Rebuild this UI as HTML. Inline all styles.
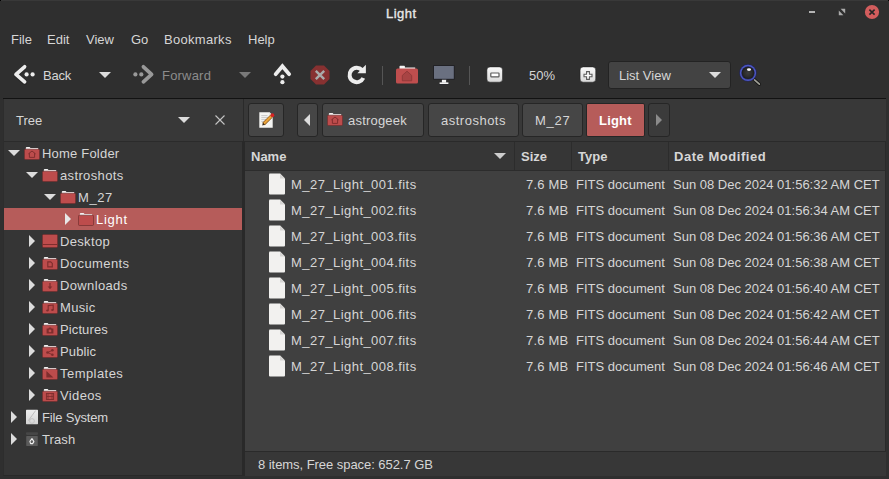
<!DOCTYPE html>
<html><head><meta charset="utf-8"><style>
html,body{margin:0;padding:0;}
body{width:889px;height:479px;overflow:hidden;position:relative;background:#2f2f2f;font-family:"Liberation Sans",sans-serif;font-size:13px;}
.t{position:absolute;white-space:pre;line-height:15px;font-size:13px;}
svg{display:block}
</style></head><body>
<div style="position:absolute;left:0;top:0;width:889px;height:1px;background:#393939"></div>
<div style="position:absolute;left:0;top:0;width:1px;height:1px;background:#000"></div><div style="position:absolute;left:888px;top:0;width:1px;height:1px;background:#000"></div>
<div class="t" style="left:386px;top:6px;color:#e8e8e8;font-weight:normal;letter-spacing:0.5px;-webkit-text-stroke:0.35px #e8e8e8">Light</div>
<div style="position:absolute;left:809px;top:11px;width:6px;height:2px;background:#b4b4b4"></div>
<svg style="position:absolute;left:834px;top:4px" width="16" height="16" viewBox="834 4 16 16"><path d="M840.6 8.8H845.2V13.4Z M838.8 10.6V15.2H843.4Z" fill="#ababab"/></svg>
<svg style="position:absolute;left:864px;top:4px" width="16" height="16" viewBox="0 0 16 16"><circle cx="8" cy="8" r="7.1" fill="#d35d5d"/><path d="M5.4 5.6L10.6 10.6M10.6 5.6L5.4 10.6" stroke="#262626" stroke-width="1.6"/></svg>
<div class="t" style="left:11px;top:32px;color:#d6d6d6;font-weight:normal;">File</div>
<div class="t" style="left:47px;top:32px;color:#d6d6d6;font-weight:normal;">Edit</div>
<div class="t" style="left:86px;top:32px;color:#d6d6d6;font-weight:normal;">View</div>
<div class="t" style="left:131px;top:32px;color:#d6d6d6;font-weight:normal;">Go</div>
<div class="t" style="left:164px;top:32px;color:#d6d6d6;font-weight:normal;letter-spacing:0.3px">Bookmarks</div>
<div class="t" style="left:248px;top:32px;color:#d6d6d6;font-weight:normal;">Help</div>
<svg style="position:absolute;left:8px;top:60px" width="32" height="30" viewBox="8 60 32 30"><path d="M24.6 66.8L16 74.4L24.6 81.8" fill="none" stroke="#222" stroke-opacity="0.5" stroke-width="5" stroke-linecap="round" stroke-linejoin="round" transform="translate(0 0.6)"/><path d="M24.6 66.8L16 74.4L24.6 81.8" fill="none" stroke="#ededed" stroke-width="3.7" stroke-linecap="round" stroke-linejoin="round"/><circle cx="26.6" cy="74.4" r="2.1" fill="#ededed"/><circle cx="32.6" cy="74.4" r="2.1" fill="#ededed"/></svg>
<div class="t" style="left:43px;top:68px;color:#d6d6d6;font-weight:normal;letter-spacing:-0.25px">Back</div>
<svg style="position:absolute;left:99px;top:72px" width="12" height="6" viewBox="0 0 12 6"><path d="M0 0H12L6 6Z" fill="#dcdcdc"/></svg>
<svg style="position:absolute;left:128px;top:60px" width="32" height="30" viewBox="128 60 32 30"><path d="M143.4 66.8L151.6 74.4L143.4 81.8" fill="none" stroke="#999" stroke-width="3.7" stroke-linecap="round" stroke-linejoin="round"/><circle cx="135.4" cy="74.4" r="2.1" fill="#999"/><circle cx="141.3" cy="74.4" r="2.1" fill="#999"/></svg>
<div class="t" style="left:162px;top:68px;color:#8c8c8c;font-weight:normal;letter-spacing:0.2px">Forward</div>
<svg style="position:absolute;left:239px;top:72px" width="12" height="6" viewBox="0 0 12 6"><path d="M0 0H12L6 6Z" fill="#7a7a7a"/></svg>
<svg style="position:absolute;left:266px;top:60px" width="32" height="30" viewBox="266 60 32 30"><path d="M275.6 74.2L282.4 66.2L289.2 74.2" fill="none" stroke="#ededed" stroke-width="3.7" stroke-linecap="round" stroke-linejoin="miter" stroke-miterlimit="3"/><circle cx="282.4" cy="76.6" r="2.1" fill="#ededed"/><circle cx="282.4" cy="82.2" r="2.1" fill="#ededed"/></svg>
<svg style="position:absolute;left:310px;top:65px" width="20" height="20" viewBox="0 0 20 20"><path d="M6 0.5H14L19.5 6V14L14 19.5H6L0.5 14V6Z" fill="#873131"/><path d="M5.8 5.8L14.2 14.2M14.2 5.8L5.8 14.2" stroke="#a9abaa" stroke-width="2.4"/></svg>
<svg style="position:absolute;left:340px;top:60px" width="32" height="30" viewBox="340 60 32 30"><path d="M362 70A7.2 7.2 0 1 0 363.3 78.0" fill="none" stroke="#ededed" stroke-width="4"/><path d="M365.9 64.8V73.3H357.4Z" fill="#ededed"/></svg>
<div style="position:absolute;left:382px;top:66px;width:1px;height:19px;background:#555"></div>
<svg style="position:absolute;left:390px;top:60px" width="32" height="30" viewBox="390 60 32 30"><path d="M399.5 69V66.5Q399.5 65.8 400.2 65.8H404.2Q404.9 65.8 404.9 66.5V67.6H415.2V69Z" fill="#f4f4f4"/><rect x="396" y="68.6" width="22" height="15" rx="1.6" fill="#bf4e4e"/><path d="M407 71.2L402.3 75.4V80.8H411.7V75.4Z" fill="#a84444" stroke="#8e3838" stroke-width="0.9"/></svg>
<svg style="position:absolute;left:430px;top:60px" width="30" height="30" viewBox="430 60 30 30"><rect x="433.2" y="65.2" width="21.4" height="14.4" fill="#1e1e24"/><rect x="434" y="66" width="19.8" height="12.8" fill="#6a7080"/><rect x="441.6" y="79.4" width="4.8" height="3.6" fill="#f2f2f2" stroke="#1e1e24" stroke-width="0.6"/><rect x="439.6" y="82.4" width="8.8" height="1.8" fill="#f2f2f2"/><rect x="439.2" y="84.2" width="9.6" height="0.8" fill="#1e1e24"/></svg>
<div style="position:absolute;left:469px;top:66px;width:1px;height:19px;background:#555"></div>
<svg style="position:absolute;left:484px;top:64px" width="22" height="22" viewBox="484 64 22 22"><defs><linearGradient id="zg" x1="0" y1="0" x2="0" y2="1"><stop offset="0" stop-color="#fafafa"/><stop offset="1" stop-color="#d9d9d9"/></linearGradient></defs><rect x="486.9" y="66.9" width="15.6" height="15.3" rx="3.2" fill="url(#zg)" stroke="#1f1f1f" stroke-width="0.5"/><rect x="490.8" y="73" width="8.2" height="3.8" rx="0.6" fill="#fff" stroke="#5a5a5a" stroke-width="1.2"/></svg>
<div class="t" style="left:529px;top:68px;color:#d6d6d6;font-weight:normal;">50%</div>
<svg style="position:absolute;left:577px;top:64px" width="22" height="22" viewBox="577 64 22 22"><rect x="580.1" y="66.9" width="15.6" height="15.3" rx="3.2" fill="url(#zg)" stroke="#1f1f1f" stroke-width="0.5"/><path d="M586.6 71.6H589.4V74.2H592V76.8H589.4V79.4H586.6V76.8H584V74.2H586.6Z" fill="#fff" stroke="#5a5a5a" stroke-width="1.1"/></svg>
<div style="position:absolute;box-sizing:border-box;left:608px;top:61px;width:123px;height:28px;background:#434343;border:1px solid #232323;border-radius:3px"></div>
<div class="t" style="left:619px;top:68px;color:#d6d6d6;font-weight:normal;">List View</div>
<svg style="position:absolute;left:709px;top:72px" width="12" height="6" viewBox="0 0 12 6"><path d="M0 0H12L6 6Z" fill="#dcdcdc"/></svg>
<svg style="position:absolute;left:732px;top:58px" width="36" height="34" viewBox="732 58 36 34"><defs><radialGradient id="lg" cx="0.5" cy="0.5" r="0.5"><stop offset="0" stop-color="#3c3c3c"/><stop offset="0.7" stop-color="#2a2a2a"/><stop offset="1" stop-color="#1a1a1a"/></radialGradient></defs><path d="M754.5 79.8L759.4 84.2" stroke="#151515" stroke-width="3.2" stroke-linecap="round"/><path d="M754.5 79.8L759.4 84.2" stroke="#a0a096" stroke-width="1.6" stroke-linecap="round"/><circle cx="748" cy="72.9" r="8.8" fill="#23275a"/><circle cx="748" cy="72.9" r="8.1" fill="#4c56c2"/><circle cx="748" cy="72.9" r="6.7" fill="#2c3060"/><circle cx="748" cy="72.9" r="6.2" fill="url(#lg)"/><ellipse cx="749" cy="69.6" rx="2.1" ry="1.3" fill="#f6f6f6"/></svg>
<div style="position:absolute;left:3px;top:98px;width:883px;height:1px;background:#121212"></div>
<div style="position:absolute;left:3px;top:99px;width:239px;height:376px;background:#353535;border-left:1px solid #2d2d2d;border-bottom:1px solid #292929"></div>
<div style="position:absolute;left:4px;top:99px;width:239px;height:42px;background:#383838;border-bottom:1px solid #2b2b2b"></div>
<div style="position:absolute;left:243px;top:99px;width:1px;height:42px;background:#2a2a2a"></div>
<div style="position:absolute;left:242px;top:141px;width:3px;height:335px;background:#292929"></div>
<div class="t" style="left:16px;top:113px;color:#d6d6d6;font-weight:normal;">Tree</div>
<svg style="position:absolute;left:178px;top:117px" width="12" height="6" viewBox="0 0 12 6"><path d="M0 0H12L6 6Z" fill="#dcdcdc"/></svg>
<svg style="position:absolute;left:215px;top:115px" width="10" height="10" viewBox="0 0 10 10"><path d="M0.5 0.5L9.5 9.5M9.5 0.5L0.5 9.5" stroke="#c4c4c4" stroke-width="1.1"/></svg>
<div style="position:absolute;left:4px;top:208px;width:238px;height:22px;background:#b65c5a"></div>
<svg style="position:absolute;left:8px;top:150px" width="12" height="6" viewBox="0 0 12 6"><path d="M0 0H12L6 6Z" fill="#dcdcdc"/></svg>
<svg style="position:absolute;left:24px;top:146px" width="16" height="15" viewBox="0 0 16 15"><path d="M1.8 4V2Q1.8 1.1 2.8 1.1H5.4Q6 1.1 6.4 2H14.2V4Z" fill="#f2f2f2"/><rect x="0.45" y="3.2" width="15.1" height="10.3" rx="1.1" fill="#bd4c4c" stroke="#6e2c2c" stroke-opacity="0.75" stroke-width="0.9"/><path d="M4.4 7.9L8 5.0L11.6 7.9M5.4 7.1V11.4H10.6V7.1" fill="none" stroke="#7e2d2d" stroke-width="0.95"/></svg>
<div class="t" style="left:42px;top:146px;color:#d6d6d6;font-weight:normal;letter-spacing:0.2px">Home Folder</div>
<svg style="position:absolute;left:26px;top:172px" width="12" height="6" viewBox="0 0 12 6"><path d="M0 0H12L6 6Z" fill="#dcdcdc"/></svg>
<svg style="position:absolute;left:42px;top:168px" width="16" height="15" viewBox="0 0 16 15"><path d="M1.8 4V2Q1.8 1.1 2.8 1.1H5.4Q6 1.1 6.4 2H14.2V4Z" fill="#f2f2f2"/><rect x="0.45" y="3.2" width="15.1" height="10.3" rx="1.1" fill="#bd4c4c" stroke="#6e2c2c" stroke-opacity="0.75" stroke-width="0.9"/></svg>
<div class="t" style="left:60px;top:168px;color:#d6d6d6;font-weight:normal;letter-spacing:0.36px">astroshots</div>
<svg style="position:absolute;left:44px;top:194px" width="12" height="6" viewBox="0 0 12 6"><path d="M0 0H12L6 6Z" fill="#dcdcdc"/></svg>
<svg style="position:absolute;left:60px;top:190px" width="16" height="15" viewBox="0 0 16 15"><path d="M1.8 4V2Q1.8 1.1 2.8 1.1H5.4Q6 1.1 6.4 2H14.2V4Z" fill="#f2f2f2"/><rect x="0.45" y="3.2" width="15.1" height="10.3" rx="1.1" fill="#bd4c4c" stroke="#6e2c2c" stroke-opacity="0.75" stroke-width="0.9"/></svg>
<div class="t" style="left:78px;top:190px;color:#d6d6d6;font-weight:normal;letter-spacing:0.6px">M_27</div>
<svg style="position:absolute;left:65px;top:213px" width="6" height="12" viewBox="0 0 6 12"><path d="M0 0V12L6 6Z" fill="#e8e8e8"/></svg>
<svg style="position:absolute;left:78px;top:212px" width="16" height="15" viewBox="0 0 16 15"><path d="M1.8 4V2Q1.8 1.1 2.8 1.1H5.4Q6 1.1 6.4 2H14.2V4Z" fill="#f2f2f2"/><rect x="0.45" y="3.2" width="15.1" height="10.3" rx="1.1" fill="#bd4c4c" stroke="#6e2c2c" stroke-opacity="0.75" stroke-width="0.9"/></svg>
<div class="t" style="left:96px;top:212px;color:#ffffff;font-weight:normal;letter-spacing:0.72px">Light</div>
<svg style="position:absolute;left:29px;top:235px" width="6" height="12" viewBox="0 0 6 12"><path d="M0 0V12L6 6Z" fill="#dcdcdc"/></svg>
<svg style="position:absolute;left:42px;top:234px" width="16" height="15" viewBox="0 0 16 15"><rect x="0.45" y="0.45" width="15.1" height="13.1" rx="1.1" fill="#bd4c4c" stroke="#6e2c2c" stroke-opacity="0.75" stroke-width="0.9"/><rect x="0.5" y="10" width="15" height="1" fill="#7e2d2d"/></svg>
<div class="t" style="left:60px;top:234px;color:#d6d6d6;font-weight:normal;letter-spacing:0.33px">Desktop</div>
<svg style="position:absolute;left:29px;top:257px" width="6" height="12" viewBox="0 0 6 12"><path d="M0 0V12L6 6Z" fill="#dcdcdc"/></svg>
<svg style="position:absolute;left:42px;top:256px" width="16" height="15" viewBox="0 0 16 15"><path d="M1.8 4V2Q1.8 1.1 2.8 1.1H5.4Q6 1.1 6.4 2H14.2V4Z" fill="#f2f2f2"/><rect x="0.45" y="3.2" width="15.1" height="10.3" rx="1.1" fill="#bd4c4c" stroke="#6e2c2c" stroke-opacity="0.75" stroke-width="0.9"/><path d="M5.8 5.8H8.7L10.3 7.4V10.9H5.8Z" fill="none" stroke="#7e2d2d" stroke-width="1.15" stroke-linejoin="miter"/></svg>
<div class="t" style="left:60px;top:256px;color:#d6d6d6;font-weight:normal;letter-spacing:0.42px">Documents</div>
<svg style="position:absolute;left:29px;top:279px" width="6" height="12" viewBox="0 0 6 12"><path d="M0 0V12L6 6Z" fill="#dcdcdc"/></svg>
<svg style="position:absolute;left:42px;top:278px" width="16" height="15" viewBox="0 0 16 15"><path d="M1.8 4V2Q1.8 1.1 2.8 1.1H5.4Q6 1.1 6.4 2H14.2V4Z" fill="#f2f2f2"/><rect x="0.45" y="3.2" width="15.1" height="10.3" rx="1.1" fill="#bd4c4c" stroke="#6e2c2c" stroke-opacity="0.75" stroke-width="0.9"/><path d="M8 5V10.6" stroke="#7e2d2d" stroke-width="1.3"/><path d="M5.6 8.4L8 11L10.4 8.4Z" fill="#7e2d2d"/></svg>
<div class="t" style="left:60px;top:278px;color:#d6d6d6;font-weight:normal;letter-spacing:0.36px">Downloads</div>
<svg style="position:absolute;left:29px;top:301px" width="6" height="12" viewBox="0 0 6 12"><path d="M0 0V12L6 6Z" fill="#dcdcdc"/></svg>
<svg style="position:absolute;left:42px;top:300px" width="16" height="15" viewBox="0 0 16 15"><path d="M1.8 4V2Q1.8 1.1 2.8 1.1H5.4Q6 1.1 6.4 2H14.2V4Z" fill="#f2f2f2"/><rect x="0.45" y="3.2" width="15.1" height="10.3" rx="1.1" fill="#bd4c4c" stroke="#6e2c2c" stroke-opacity="0.75" stroke-width="0.9"/><path d="M6.2 10.6V5.6L11.2 5V10" fill="none" stroke="#7e2d2d" stroke-width="1.1"/><ellipse cx="5.4" cy="10.6" rx="1.3" ry="1" fill="#7e2d2d"/><ellipse cx="10.4" cy="10" rx="1.3" ry="1" fill="#7e2d2d"/></svg>
<div class="t" style="left:60px;top:300px;color:#d6d6d6;font-weight:normal;letter-spacing:0.3px">Music</div>
<svg style="position:absolute;left:29px;top:323px" width="6" height="12" viewBox="0 0 6 12"><path d="M0 0V12L6 6Z" fill="#dcdcdc"/></svg>
<svg style="position:absolute;left:42px;top:322px" width="16" height="15" viewBox="0 0 16 15"><path d="M1.8 4V2Q1.8 1.1 2.8 1.1H5.4Q6 1.1 6.4 2H14.2V4Z" fill="#f2f2f2"/><rect x="0.45" y="3.2" width="15.1" height="10.3" rx="1.1" fill="#bd4c4c" stroke="#6e2c2c" stroke-opacity="0.75" stroke-width="0.9"/><path d="M4.6 6.6H6.3L7 5.6H9L9.7 6.6H11.4V11.4H4.6Z" fill="#7e2d2d"/><circle cx="8" cy="8.9" r="1.4" fill="#bf4d4d"/></svg>
<div class="t" style="left:60px;top:322px;color:#d6d6d6;font-weight:normal;letter-spacing:0.11px">Pictures</div>
<svg style="position:absolute;left:29px;top:345px" width="6" height="12" viewBox="0 0 6 12"><path d="M0 0V12L6 6Z" fill="#dcdcdc"/></svg>
<svg style="position:absolute;left:42px;top:344px" width="16" height="15" viewBox="0 0 16 15"><path d="M1.8 4V2Q1.8 1.1 2.8 1.1H5.4Q6 1.1 6.4 2H14.2V4Z" fill="#f2f2f2"/><rect x="0.45" y="3.2" width="15.1" height="10.3" rx="1.1" fill="#bd4c4c" stroke="#6e2c2c" stroke-opacity="0.75" stroke-width="0.9"/><path d="M5.6 8.5L10.4 6.3M5.6 8.5L10.4 10.7" stroke="#7e2d2d" stroke-width="0.9"/><circle cx="5.5" cy="8.5" r="1.3" fill="#7e2d2d"/><circle cx="10.4" cy="6.2" r="1.3" fill="#7e2d2d"/><circle cx="10.4" cy="10.8" r="1.3" fill="#7e2d2d"/></svg>
<div class="t" style="left:60px;top:344px;color:#d6d6d6;font-weight:normal;letter-spacing:0.14px">Public</div>
<svg style="position:absolute;left:29px;top:367px" width="6" height="12" viewBox="0 0 6 12"><path d="M0 0V12L6 6Z" fill="#dcdcdc"/></svg>
<svg style="position:absolute;left:42px;top:366px" width="16" height="15" viewBox="0 0 16 15"><path d="M1.8 4V2Q1.8 1.1 2.8 1.1H5.4Q6 1.1 6.4 2H14.2V4Z" fill="#f2f2f2"/><rect x="0.45" y="3.2" width="15.1" height="10.3" rx="1.1" fill="#bd4c4c" stroke="#6e2c2c" stroke-opacity="0.75" stroke-width="0.9"/><path d="M4.4 5.1V11.4H11.4Z" fill="#7e2d2d"/></svg>
<div class="t" style="left:60px;top:366px;color:#d6d6d6;font-weight:normal;letter-spacing:0.45px">Templates</div>
<svg style="position:absolute;left:29px;top:389px" width="6" height="12" viewBox="0 0 6 12"><path d="M0 0V12L6 6Z" fill="#dcdcdc"/></svg>
<svg style="position:absolute;left:42px;top:388px" width="16" height="15" viewBox="0 0 16 15"><path d="M1.8 4V2Q1.8 1.1 2.8 1.1H5.4Q6 1.1 6.4 2H14.2V4Z" fill="#f2f2f2"/><rect x="0.45" y="3.2" width="15.1" height="10.3" rx="1.1" fill="#bd4c4c" stroke="#6e2c2c" stroke-opacity="0.75" stroke-width="0.9"/><rect x="4.4" y="5.5" width="7.2" height="6" fill="none" stroke="#7e2d2d" stroke-width="0.9"/><path d="M6 5.5V11.5M10 5.5V11.5M4.4 8.5H11.6" stroke="#7e2d2d" stroke-width="0.8"/></svg>
<div class="t" style="left:60px;top:388px;color:#d6d6d6;font-weight:normal;letter-spacing:0.36px">Videos</div>
<svg style="position:absolute;left:11px;top:411px" width="6" height="12" viewBox="0 0 6 12"><path d="M0 0V12L6 6Z" fill="#dcdcdc"/></svg>
<svg style="position:absolute;left:26px;top:409px" width="12" height="16" viewBox="0 0 12 16"><defs><linearGradient id="fsg" x1="0" y1="0" x2="0" y2="1"><stop offset="0" stop-color="#ececec"/><stop offset="1" stop-color="#d4d4d4"/></linearGradient></defs><rect x="0" y="0.8" width="12" height="14.4" rx="0.6" fill="url(#fsg)"/><path d="M9.6 1.6L2.4 11.6" stroke="#b4b4b4" stroke-width="0.8"/><circle cx="6" cy="12" r="2.4" fill="none" stroke="#bdbdbd" stroke-width="0.8"/></svg>
<div class="t" style="left:42px;top:410px;color:#d6d6d6;font-weight:normal;letter-spacing:-0.18px">File System</div>
<svg style="position:absolute;left:11px;top:433px" width="6" height="12" viewBox="0 0 6 12"><path d="M0 0V12L6 6Z" fill="#dcdcdc"/></svg>
<svg style="position:absolute;left:26px;top:432px" width="12" height="14" viewBox="0 0 12 14"><rect x="0" y="0.3" width="12" height="2.6" rx="0.8" fill="#464646"/><rect x="0.2" y="4.1" width="11.6" height="9.9" rx="0.4" fill="#5b5b5b"/><path d="M6 6.6L7.9 9.6L6.6 11.6H4.6L3.9 9.3Z" fill="none" stroke="#f0f0f0" stroke-width="1.1" stroke-linejoin="round"/></svg>
<div class="t" style="left:42px;top:432px;color:#d6d6d6;font-weight:normal;letter-spacing:0.1px">Trash</div>
<div style="position:absolute;left:244px;top:99px;width:642px;height:42px;background:#383838"></div>
<div style="position:absolute;left:245px;top:141px;width:641px;height:1px;background:#2a2a2a"></div>
<div style="position:absolute;box-sizing:border-box;left:248px;top:103px;width:36px;height:34px;background:#464646;border:1px solid #262626;border-radius:3px"></div>
<svg style="position:absolute;left:246px;top:102px" width="40" height="36" viewBox="246 102 40 36"><path d="M259.3 112.3H269.6L272.7 115.4V127.8H259.3Z" fill="#f5f5f3"/><path d="M269.6 112.3V115.4H272.7Z" fill="#d8d8d6"/><path d="M261.3 115.6H267.5M261.3 117.6H268M261.3 119.6H267M261.3 121.6H266" stroke="#b8b8b8" stroke-width="0.7"/><path d="M263.6 124L271.4 116.2" stroke="#7a4a10" stroke-width="3.4" stroke-linecap="butt"/><path d="M263.6 124L271.4 116.2" stroke="#eba53c" stroke-width="2.4" stroke-linecap="butt"/><path d="M262.2 125.4L262.9 122.6L265 124.7Z" fill="#3a2a1a"/><circle cx="272.4" cy="115.2" r="1.9" fill="#d42424"/></svg>
<div style="position:absolute;box-sizing:border-box;left:297px;top:103px;width:21px;height:34px;background:#464646;border:1px solid #262626;border-radius:3px"></div>
<svg style="position:absolute;left:304px;top:114px" width="6" height="12" viewBox="0 0 6 12"><path d="M6 0V12L0 6Z" fill="#dcdcdc"/></svg>
<div style="position:absolute;box-sizing:border-box;left:322px;top:103px;width:102px;height:34px;background:#464646;border:1px solid #262626;border-radius:3px"></div>
<svg style="position:absolute;left:327px;top:112px" width="16" height="15" viewBox="0 0 16 15"><path d="M1.8 4V2Q1.8 1.1 2.8 1.1H5.4Q6 1.1 6.4 2H14.2V4Z" fill="#f2f2f2"/><rect x="0.45" y="3.2" width="15.1" height="10.3" rx="1.1" fill="#bd4c4c" stroke="#6e2c2c" stroke-opacity="0.75" stroke-width="0.9"/><path d="M4.4 7.9L8 5.0L11.6 7.9M5.4 7.1V11.4H10.6V7.1" fill="none" stroke="#7e2d2d" stroke-width="0.95"/></svg>
<div class="t" style="left:348px;top:113px;color:#d6d6d6;font-weight:normal;letter-spacing:0.2px">astrogeek</div>
<div style="position:absolute;box-sizing:border-box;left:428px;top:103px;width:91px;height:34px;background:#464646;border:1px solid #262626;border-radius:3px"></div>
<div class="t" style="left:441px;top:113px;color:#d6d6d6;font-weight:normal;letter-spacing:0.5px">astroshots</div>
<div style="position:absolute;box-sizing:border-box;left:522px;top:103px;width:61px;height:34px;background:#464646;border:1px solid #262626;border-radius:3px"></div>
<div class="t" style="left:535px;top:113px;color:#d6d6d6;font-weight:normal;letter-spacing:0.7px">M_27</div>
<div style="position:absolute;box-sizing:border-box;left:586px;top:103px;width:59px;height:34px;background:#b65c5a;border:1px solid #262626;border-radius:2px"></div>
<div class="t" style="left:599px;top:113px;color:#ffffff;font-weight:bold;letter-spacing:0.2px">Light</div>
<div style="position:absolute;box-sizing:border-box;left:648px;top:103px;width:22px;height:34px;background:#3b3b3b;border:1px solid #262626;border-radius:3px"></div>
<svg style="position:absolute;left:656px;top:114px" width="6" height="12" viewBox="0 0 6 12"><path d="M0 0V12L6 6Z" fill="#8a8a8a"/></svg>
<div style="position:absolute;left:245px;top:142px;width:640px;height:28px;background:#363636"></div>
<div style="position:absolute;left:245px;top:170px;width:640px;height:1px;background:#2c2c2c"></div>
<div style="position:absolute;left:514px;top:142px;width:1px;height:28px;background:#2c2c2c"></div>
<div style="position:absolute;left:571px;top:142px;width:1px;height:28px;background:#2c2c2c"></div>
<div style="position:absolute;left:668px;top:142px;width:1px;height:28px;background:#2c2c2c"></div>
<div class="t" style="left:251px;top:149px;color:#d6d6d6;font-weight:bold;">Name</div>
<svg style="position:absolute;left:494px;top:153px" width="12" height="6" viewBox="0 0 12 6"><path d="M0 0H12L6 6Z" fill="#cdcdcd"/></svg>
<div class="t" style="left:521px;top:149px;color:#d6d6d6;font-weight:bold;">Size</div>
<div class="t" style="left:578px;top:149px;color:#d6d6d6;font-weight:bold;">Type</div>
<div class="t" style="left:674px;top:149px;color:#d6d6d6;font-weight:bold;letter-spacing:0.53px">Date Modified</div>
<div style="position:absolute;left:245px;top:171px;width:640px;height:280px;background:#404040"></div>
<div style="position:absolute;left:245px;top:451px;width:641px;height:1px;background:#2a2a2a"></div>
<div style="position:absolute;left:885px;top:142px;width:1px;height:310px;background:#2a2a2a"></div>
<svg style="position:absolute;left:268px;top:173px" width="18" height="22" viewBox="0 0 18 22"><path d="M1.5 0.5H12L17 5.5V20.5A1 1 0 0 1 16 21.5H2A1 1 0 0 1 1 20.5V1.5Z" fill="#f2f1ef"/><path d="M12 0.5V5.5H17Z" fill="#d6d5d3"/></svg>
<div class="t" style="left:291px;top:177px;color:#d6d6d6;font-weight:normal;letter-spacing:0.45px">M_27_Light_001.fits</div>
<div class="t" style="left:526px;top:177px;color:#d6d6d6;font-weight:normal;letter-spacing:0.2px">7.6 MB</div>
<div class="t" style="left:576px;top:177px;color:#d6d6d6;font-weight:normal;">FITS document</div>
<div class="t" style="left:673px;top:177px;color:#d6d6d6;font-weight:normal;">Sun 08 Dec 2024 01:56:32 AM CET</div>
<svg style="position:absolute;left:268px;top:199px" width="18" height="22" viewBox="0 0 18 22"><path d="M1.5 0.5H12L17 5.5V20.5A1 1 0 0 1 16 21.5H2A1 1 0 0 1 1 20.5V1.5Z" fill="#f2f1ef"/><path d="M12 0.5V5.5H17Z" fill="#d6d5d3"/></svg>
<div class="t" style="left:291px;top:203px;color:#d6d6d6;font-weight:normal;letter-spacing:0.45px">M_27_Light_002.fits</div>
<div class="t" style="left:526px;top:203px;color:#d6d6d6;font-weight:normal;letter-spacing:0.2px">7.6 MB</div>
<div class="t" style="left:576px;top:203px;color:#d6d6d6;font-weight:normal;">FITS document</div>
<div class="t" style="left:673px;top:203px;color:#d6d6d6;font-weight:normal;">Sun 08 Dec 2024 01:56:34 AM CET</div>
<svg style="position:absolute;left:268px;top:225px" width="18" height="22" viewBox="0 0 18 22"><path d="M1.5 0.5H12L17 5.5V20.5A1 1 0 0 1 16 21.5H2A1 1 0 0 1 1 20.5V1.5Z" fill="#f2f1ef"/><path d="M12 0.5V5.5H17Z" fill="#d6d5d3"/></svg>
<div class="t" style="left:291px;top:229px;color:#d6d6d6;font-weight:normal;letter-spacing:0.45px">M_27_Light_003.fits</div>
<div class="t" style="left:526px;top:229px;color:#d6d6d6;font-weight:normal;letter-spacing:0.2px">7.6 MB</div>
<div class="t" style="left:576px;top:229px;color:#d6d6d6;font-weight:normal;">FITS document</div>
<div class="t" style="left:673px;top:229px;color:#d6d6d6;font-weight:normal;">Sun 08 Dec 2024 01:56:36 AM CET</div>
<svg style="position:absolute;left:268px;top:251px" width="18" height="22" viewBox="0 0 18 22"><path d="M1.5 0.5H12L17 5.5V20.5A1 1 0 0 1 16 21.5H2A1 1 0 0 1 1 20.5V1.5Z" fill="#f2f1ef"/><path d="M12 0.5V5.5H17Z" fill="#d6d5d3"/></svg>
<div class="t" style="left:291px;top:255px;color:#d6d6d6;font-weight:normal;letter-spacing:0.45px">M_27_Light_004.fits</div>
<div class="t" style="left:526px;top:255px;color:#d6d6d6;font-weight:normal;letter-spacing:0.2px">7.6 MB</div>
<div class="t" style="left:576px;top:255px;color:#d6d6d6;font-weight:normal;">FITS document</div>
<div class="t" style="left:673px;top:255px;color:#d6d6d6;font-weight:normal;">Sun 08 Dec 2024 01:56:38 AM CET</div>
<svg style="position:absolute;left:268px;top:277px" width="18" height="22" viewBox="0 0 18 22"><path d="M1.5 0.5H12L17 5.5V20.5A1 1 0 0 1 16 21.5H2A1 1 0 0 1 1 20.5V1.5Z" fill="#f2f1ef"/><path d="M12 0.5V5.5H17Z" fill="#d6d5d3"/></svg>
<div class="t" style="left:291px;top:281px;color:#d6d6d6;font-weight:normal;letter-spacing:0.45px">M_27_Light_005.fits</div>
<div class="t" style="left:526px;top:281px;color:#d6d6d6;font-weight:normal;letter-spacing:0.2px">7.6 MB</div>
<div class="t" style="left:576px;top:281px;color:#d6d6d6;font-weight:normal;">FITS document</div>
<div class="t" style="left:673px;top:281px;color:#d6d6d6;font-weight:normal;">Sun 08 Dec 2024 01:56:40 AM CET</div>
<svg style="position:absolute;left:268px;top:303px" width="18" height="22" viewBox="0 0 18 22"><path d="M1.5 0.5H12L17 5.5V20.5A1 1 0 0 1 16 21.5H2A1 1 0 0 1 1 20.5V1.5Z" fill="#f2f1ef"/><path d="M12 0.5V5.5H17Z" fill="#d6d5d3"/></svg>
<div class="t" style="left:291px;top:307px;color:#d6d6d6;font-weight:normal;letter-spacing:0.45px">M_27_Light_006.fits</div>
<div class="t" style="left:526px;top:307px;color:#d6d6d6;font-weight:normal;letter-spacing:0.2px">7.6 MB</div>
<div class="t" style="left:576px;top:307px;color:#d6d6d6;font-weight:normal;">FITS document</div>
<div class="t" style="left:673px;top:307px;color:#d6d6d6;font-weight:normal;">Sun 08 Dec 2024 01:56:42 AM CET</div>
<svg style="position:absolute;left:268px;top:329px" width="18" height="22" viewBox="0 0 18 22"><path d="M1.5 0.5H12L17 5.5V20.5A1 1 0 0 1 16 21.5H2A1 1 0 0 1 1 20.5V1.5Z" fill="#f2f1ef"/><path d="M12 0.5V5.5H17Z" fill="#d6d5d3"/></svg>
<div class="t" style="left:291px;top:333px;color:#d6d6d6;font-weight:normal;letter-spacing:0.45px">M_27_Light_007.fits</div>
<div class="t" style="left:526px;top:333px;color:#d6d6d6;font-weight:normal;letter-spacing:0.2px">7.6 MB</div>
<div class="t" style="left:576px;top:333px;color:#d6d6d6;font-weight:normal;">FITS document</div>
<div class="t" style="left:673px;top:333px;color:#d6d6d6;font-weight:normal;">Sun 08 Dec 2024 01:56:44 AM CET</div>
<svg style="position:absolute;left:268px;top:355px" width="18" height="22" viewBox="0 0 18 22"><path d="M1.5 0.5H12L17 5.5V20.5A1 1 0 0 1 16 21.5H2A1 1 0 0 1 1 20.5V1.5Z" fill="#f2f1ef"/><path d="M12 0.5V5.5H17Z" fill="#d6d5d3"/></svg>
<div class="t" style="left:291px;top:359px;color:#d6d6d6;font-weight:normal;letter-spacing:0.45px">M_27_Light_008.fits</div>
<div class="t" style="left:526px;top:359px;color:#d6d6d6;font-weight:normal;letter-spacing:0.2px">7.6 MB</div>
<div class="t" style="left:576px;top:359px;color:#d6d6d6;font-weight:normal;">FITS document</div>
<div class="t" style="left:673px;top:359px;color:#d6d6d6;font-weight:normal;">Sun 08 Dec 2024 01:56:46 AM CET</div>
<div style="position:absolute;left:245px;top:452px;width:641px;height:24px;background:#373737"></div>
<div class="t" style="left:258px;top:457px;color:#d6d6d6;font-weight:normal;letter-spacing:-0.05px">8 items, Free space: 652.7 GB</div>
</body></html>
